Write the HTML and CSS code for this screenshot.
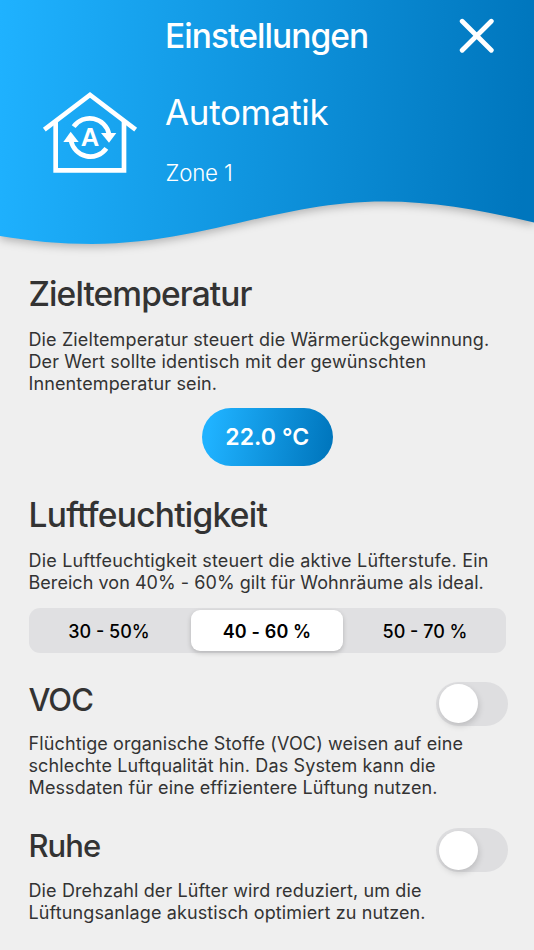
FILE: index.html
```html
<!DOCTYPE html>
<html lang="de">
<head>
<meta charset="utf-8">
<meta name="viewport" content="width=device-width, initial-scale=1">
<title>Einstellungen</title>
<link rel="stylesheet" href="styles.css">
</head>
<body>
<header class="header">
  <svg class="wave" viewBox="0 0 534 270" aria-hidden="true">
    <defs>
      <linearGradient id="blue" x1="0" y1="0" x2="534" y2="40" gradientUnits="userSpaceOnUse">
        <stop offset="0" stop-color="#1fb2ff"/>
        <stop offset="1" stop-color="#0076bd"/>
      </linearGradient>
    </defs>
    <path fill="url(#blue)" d="M-20 -20H554V227L534 222.5C485 211 435 201.5 384 201.5C280 201.5 200 244 92 244C60 244 30 241 0 236L-20 232Z"/>
  </svg>
  <div class="topbar">
    <h1 class="title">Einstellungen</h1>
    <button class="close" aria-label="Schließen">
      <svg viewBox="0 0 36 36"><path d="M3.2 3.2L32.3 32.3M32.3 3.2L3.2 32.3"/></svg>
    </button>
  </div>
  <div class="mode">
    <svg class="house" viewBox="0 0 360 315" aria-hidden="true">
      <path class="line" d="M43 149L180 45L317 149"/>
      <path class="line" d="M77 124V271H282V124"/>
      <path class="arc" d="M131 140A59 59 0 0 1 237 162"/>
      <path class="arc" d="M229 205A59 59 0 0 1 123 182"/>
      <path class="tip" d="M213 159H259L237 188Z"/>
      <path class="tip" d="M100 186H146L122 155Z"/>
      <text x="180" y="199">A</text>
    </svg>
    <div>
      <h2 class="mode-name">Automatik</h2>
      <p class="zone">Zone 1</p>
    </div>
  </div>
</header>
<main class="content">
  <section class="section temperature">
    <h2 class="heading">Zieltemperatur</h2>
    <p class="text">Die Zieltemperatur steuert die Wärmerückgewinnung.<br>Der Wert sollte identisch mit der gewünschten<br>Innentemperatur sein.</p>
    <button class="value">22.0 °C</button>
  </section>
  <section class="section humidity">
    <h2 class="heading wide">Luftfeuchtigkeit</h2>
    <p class="text"><span class="loose">Die Luftfeuchtigkeit steuert die aktive Lüfterstufe. Ein</span><br><span class="tight">Bereich von 40% - 60% gilt für Wohnräume als ideal.</span></p>
    <div class="segments">
      <button class="segment">30 - 50%</button>
      <button class="segment selected">40 - 60 %</button>
      <button class="segment">50 - 70 %</button>
    </div>
  </section>
  <section class="section option">
    <div class="row">
      <h2 class="heading small">VOC</h2>
      <button class="toggle" role="switch" aria-checked="false" aria-label="VOC"><span class="thumb"></span></button>
    </div>
    <p class="text">Flüchtige organische Stoffe (VOC) weisen auf eine<br>schlechte Luftqualität hin. Das System kann die<br>Messdaten für eine effizientere Lüftung nutzen.</p>
  </section>
  <section class="section option">
    <div class="row">
      <h2 class="heading small">Ruhe</h2>
      <button class="toggle" role="switch" aria-checked="false" aria-label="Ruhe"><span class="thumb"></span></button>
    </div>
    <p class="text">Die Drehzahl der Lüfter wird reduziert, um die<br>Lüftungsanlage akustisch optimiert zu nutzen.</p>
  </section>
</main>
</body>
</html>
```
FILE: styles.css
```css
* { box-sizing: border-box; margin: 0; padding: 0; }
body {
  height: 950px;
  overflow: hidden;
  background: #efefef;
  color: #333;
  font-family: Inter, "Liberation Sans", sans-serif;
}
button { border: 0; background: none; font: inherit; color: inherit; }
.header { position: relative; height: 273.5px; padding-top: 16px; color: #fff; }
.wave {
  position: absolute;
  inset: 0;
  z-index: -1;
  width: 534px;
  height: 270px;
  filter: drop-shadow(0 3px 4px rgba(0, 0, 0, .25));
}
.topbar { display: flex; justify-content: space-between; height: 64px; padding: 0 39px 0 165px; }
.title { font-size: 33.5px; font-weight: 500; line-height: 40px; letter-spacing: -.93px; }
.close { width: 36px; height: 36px; margin-top: 2px; }
.close svg { display: block; fill: none; stroke: #fff; stroke-width: 4.8; stroke-linecap: round; }
.mode { display: flex; padding-left: 30px; }
.house { width: 120px; height: 105px; margin-right: 15px; }
.line { fill: none; stroke: #fff; stroke-width: 14; }
.arc { fill: none; stroke: #fff; stroke-width: 14; }
.tip { fill: #fff; }
.house text { fill: #fff; font: 700 77px "Liberation Sans", sans-serif; text-anchor: middle; }
.mode-name { margin-top: 10.8px; font-size: 35px; font-weight: 400; line-height: 42px; letter-spacing: -.35px; }
.zone { margin-top: 26.3px; padding-left: .5px; font-size: 22.3px; font-weight: 300; line-height: 28px; letter-spacing: -.2px; }
.content { padding-left: 28.5px; }
.heading { font-size: 33.5px; font-weight: 500; line-height: 40px; letter-spacing: -.9px; }
.heading.wide { letter-spacing: -.73px; }
.heading.small { font-size: 31px; letter-spacing: -1px; }
.text { font-size: 18px; line-height: 22.1px; letter-spacing: .12px; white-space: nowrap; }
.text .loose { letter-spacing: .18px; }
.text .tight { letter-spacing: .05px; }
.temperature { height: 221px; }
.temperature .text, .humidity .text { margin-top: 15.6px; }
.value {
  display: block;
  width: 131px;
  height: 57.5px;
  margin: 12.8px 0 0 173.3px;
  padding-top: 1px;
  border-radius: 29px;
  background: linear-gradient(100deg, #1fb2ff 8%, #0076bd 96%);
  color: #fff;
  font-size: 23px;
  font-weight: 600;
  letter-spacing: .1px;
}
.humidity { height: 185px; }
.segments {
  display: grid;
  grid-template-columns: 159px 154px 159px;
  width: 477px;
  height: 45.5px;
  margin-top: 13.6px;
  padding: 2.5px;
  border-radius: 11px;
  background: #e0e0e2;
}
.segment { padding: 2px 3px 0 0; color: #000; font-size: 18px; font-weight: 500; }
.segment:last-child { padding: 2px 0 0 3px; }
.segment.selected {
  margin: 0 1px;
  padding: 2px 0 0;
  border-radius: 9px;
  background: #fff;
  box-shadow: 0 2px 5px rgba(0, 0, 0, .2);
  font-weight: 600;
  letter-spacing: .15px;
}
.option { height: 146.8px; }
.row { display: flex; justify-content: space-between; height: 53.3px; padding-right: 26px; }
.toggle {
  width: 72px;
  height: 44px;
  margin-top: 2px;
  padding: 2.5px;
  border-radius: 22px;
  background: #dedee0;
}
.thumb {
  display: block;
  width: 39px;
  height: 39px;
  border-radius: 50%;
  background: #fff;
  box-shadow: 1px 3px 6px rgba(0, 0, 0, .15);
}
```
